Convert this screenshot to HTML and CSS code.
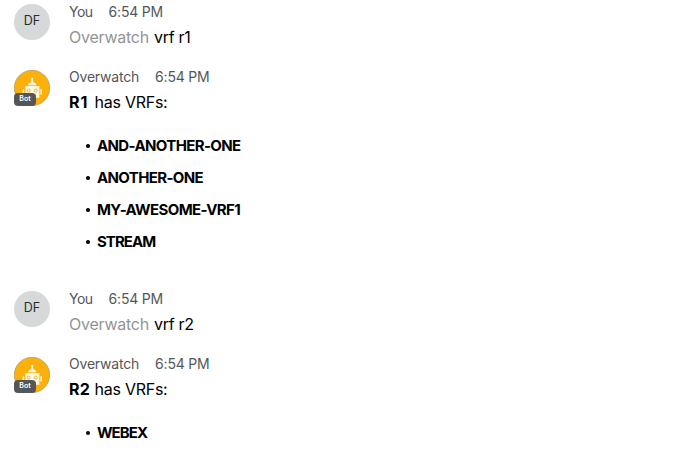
FILE: index.html
```
<!DOCTYPE html>
<html lang="en">
<head>
<meta charset="utf-8">
<title>Overwatch</title>
<link rel="stylesheet" href="styles.css">
</head>
<body>
<svg width="0" height="0" class="defs">
  <symbol id="bot" viewBox="0 0 36 36">
    <circle cx="18" cy="18" r="17.700" fill="#fcb00b" stroke="#a08c58" stroke-width=".6"/>
    <g fill="#fff6de">
      <circle cx="18.200" cy="8.800" r="1.100"/>
      <path d="M17.600 9h1.200l.6 3.300h-2.400zM14 15.200q.3-3 4.200-3t4.200 3zM11.400 16h14v11.800h-14zM8.600 19.200h1.600v5.200H8.600zM26.400 19.200H28v5.200h-1.600z"/>
    </g>
    <g fill="#fff6de" stroke="#e9b44a" stroke-width="1"><circle cx="14.700" cy="20.600" r="1.500"/><circle cx="21.800" cy="20.600" r="1.500"/></g>
  </symbol>
</svg>
<main class="chat">
  <article class="message user">
    <div class="avatar initials">DF</div>
    <div class="content">
      <header class="meta"><span class="you">You</span><time>6:54 PM</time></header>
      <p class="text"><span class="mention">Overwatch</span><span class="cmd">vrf r1</span></p>
    </div>
  </article>
  <article class="message bot">
    <div class="avatar"><svg class="icon"><use href="#bot"/></svg><span class="badge">Bot</span></div>
    <div class="content">
      <header class="meta"><span class="name">Overwatch</span><time>6:54 PM</time></header>
      <p class="text"><b class="router r1">R1</b><span class="has">has VRFs:</span></p>
      <ul class="vrfs">
        <li><b>AND-ANOTHER-ONE</b></li>
        <li><b>ANOTHER-ONE</b></li>
        <li><b>MY-AWESOME-VRF1</b></li>
        <li><b class="tight">STREAM</b></li>
      </ul>
    </div>
  </article>
  <article class="message user">
    <div class="avatar initials">DF</div>
    <div class="content">
      <header class="meta"><span class="you">You</span><time>6:54 PM</time></header>
      <p class="text"><span class="mention">Overwatch</span><span class="cmd">vrf r2</span></p>
    </div>
  </article>
  <article class="message bot">
    <div class="avatar"><svg class="icon"><use href="#bot"/></svg><span class="badge">Bot</span></div>
    <div class="content">
      <header class="meta"><span class="name">Overwatch</span><time>6:54 PM</time></header>
      <p class="text"><b class="router">R2</b><span class="has">has VRFs:</span></p>
      <ul class="vrfs">
        <li><b class="tight">WEBEX</b></li>
      </ul>
    </div>
  </article>
</main>
</body>
</html>
```
FILE: styles.css
```
* { box-sizing: border-box; }
body { margin: 0; background: #fff; color: #000; font-family: Inter, "Liberation Sans", sans-serif; }
.defs { display: block; }
.chat { height: 472px; overflow: hidden; }
.message { display: grid; grid-template-columns: 36px 1fr; column-gap: 19px; padding-left: 14px; align-items: start; }
.user { height: 65px; }
.bot { min-height: 120px; }
.avatar { position: relative; width: 36px; height: 36px; margin-top: 4px; }
.bot .avatar { margin-top: 5px; }
.initials { display: flex; align-items: center; justify-content: center; border-radius: 50%; background: #d5d9da; color: #2b2b2b; font-size: 12.5px; padding-bottom: 3px; }
.icon { display: block; width: 36px; height: 36px; }
.badge { position: absolute; left: 0; bottom: 0; width: 22px; height: 13px; border-radius: 4px; background: #535759; color: #fff; font-size: 7px; line-height: 12px; text-align: center; font-weight: 600; }
.meta { display: flex; gap: 16px; height: 25px; line-height: 24px; font-size: 14px; color: #545759; letter-spacing: -.2px; }
.you { letter-spacing: -.5px; }
.text { display: flex; gap: 5px; margin: 0; height: 25px; line-height: 25px; font-size: 16px; letter-spacing: -.25px; }
.mention { color: #929596; }
.router { width: 20.5px; letter-spacing: .2px; }
.r1 { letter-spacing: 1px; }
.vrfs { margin: 14px 0 0; padding: 0 0 30px 28px; list-style: none; }
.vrfs li { display: flex; align-items: center; position: relative; height: 32px; font-size: 15px; letter-spacing: -.63px; }
.vrfs .tight { letter-spacing: -.95px; }
.vrfs li::before { content: ""; position: absolute; left: -11px; top: 15px; width: 4px; height: 4px; border-radius: 50%; background: #000; }
```
